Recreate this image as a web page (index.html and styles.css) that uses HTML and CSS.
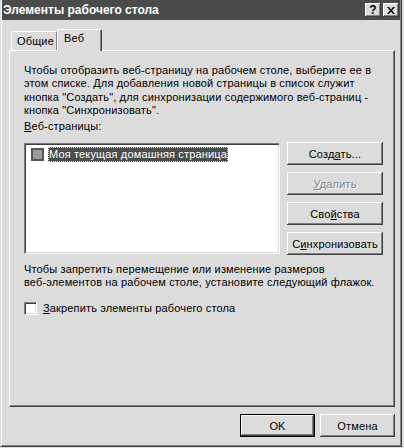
FILE: index.html
```html
<!DOCTYPE html>
<html lang="ru">
<head>
    <meta charset="UTF-8">
    <title>Элементы рабочего стола</title>
    <link rel="stylesheet" href="styles.css">
</head>
<body>
    <div class="window">
        <div class="frame">
            <div class="titlebar">
                <span class="title">Элементы рабочего стола</span>
                <div class="caption-buttons">
                    <span class="caption-btn help">?</span>
                    <span class="caption-btn">
                        <svg width="8" height="7" viewBox="0 0 8 7">
                            <path d="M0 0h2l2 2.5 2-2.5h2l-3 3.5 3 3.5h-2l-2-2.5-2 2.5h-2l3-3.5z" fill="#000"/>
                        </svg>
                    </span>
                </div>
            </div>

            <div class="content">
                <div class="tabs">
                    <div class="tab">Общие</div>
                    <div class="tab active">Веб</div>
                </div>

                <div class="panel">
                    <p class="text">
                        Чтобы отобразить веб-страницу на рабочем столе, выберите ее в<br>
                        этом списке. Для добавления новой страницы в список служит<br>
                        кнопка "Создать", для синхронизации содержимого веб-страниц -<br>
                        кнопка "Синхронизовать".
                    </p>

                    <div class="label"><u>В</u>еб-страницы:</div>

                    <div class="list-row">
                        <div class="listbox">
                            <div class="item">
                                <span class="item-check"></span>
                                <span class="item-text">Моя текущая домашняя страница</span>
                            </div>
                        </div>
                        <div class="side-buttons">
                            <button class="btn">Созд<u>а</u>ть...</button>
                            <button class="btn" disabled><u>У</u>далить</button>
                            <button class="btn">Сво<u>й</u>ства</button>
                            <button class="btn">С<u>и</u>нхронизовать</button>
                        </div>
                    </div>

                    <p class="text note">
                        Чтобы запретить перемещение или изменение размеров<br>
                        веб-элементов на рабочем столе, установите следующий флажок.
                    </p>

                    <label class="check-row">
                        <span class="checkbox"></span>
                        <span><u>З</u>акрепить элементы рабочего стола</span>
                    </label>
                </div>

                <div class="footer">
                    <button class="btn default">OK</button>
                    <button class="btn">Отмена</button>
                </div>
            </div>
        </div>
    </div>
</body>
</html>
```

FILE: styles.css
```css
* {
    box-sizing: border-box;
}
body {
    margin: 0;
    font-family: "Liberation Sans", Arial, sans-serif;
    font-size: 11px;
    letter-spacing: 0.15px;
    color: #000;
    background-color: #dcdcdc;
}
.window {
    width: 402px;
    height: 447px;
    background-color: #dcdcdc;
    border-left: 1px solid #dcdcdc;
    border-right: 1px solid #404040;
    border-bottom: 1px solid #404040;
}
.frame {
    height: 100%;
    border-left: 1px solid #fff;
    border-right: 1px solid #808080;
    border-bottom: 1px solid #808080;
}
.titlebar {
    height: 20px;
    background-color: #4b4b4b;
    display: flex;
    align-items: center;
    justify-content: space-between;
    padding: 0 1px 0 1px;
}
.title {
    color: #fff;
    font-weight: bold;
    font-size: 12px;
    letter-spacing: 0;
}
.caption-buttons {
    display: flex;
    gap: 2px;
}
.caption-btn {
    width: 16px;
    height: 14px;
    background-color: #dcdcdc;
    box-shadow: inset -1px -1px #404040, inset 1px 1px #fff, inset -2px -2px #808080;
    display: flex;
    align-items: center;
    justify-content: center;
}
.help {
    font-weight: bold;
    font-size: 12px;
    line-height: 14px;
}
.content {
    padding: 9px 5px 0 7px;
}
.tabs {
    display: flex;
    align-items: flex-end;
    height: 21px;
    padding-left: 2px;
}
.tab {
    height: 19px;
    width: 46px;
    padding-left: 5px;
    line-height: 18px;
    border-top: 1px solid #fff;
    border-left: 1px solid #fff;
    border-right: 1px solid #808080;
    border-radius: 2px 2px 0 0;
}
.tab.active {
    position: relative;
    width: 45px;
    height: 22px;
    margin-bottom: -1px;
    padding-left: 6px;
    line-height: 16px;
    background-color: #dcdcdc;
    border-right-color: #404040;
    box-shadow: inset -1px 0 #808080;
}
.panel {
    width: 386px;
    height: 357px;
    padding: 13px 0 0 14px;
    border-top: 1px solid #fff;
    border-left: 1px solid #fff;
    border-right: 1px solid #404040;
    border-bottom: 1px solid #404040;
    box-shadow: inset -1px -1px #808080;
}
.text {
    margin: 0;
    line-height: 13.3px;
    white-space: nowrap;
}
.label {
    margin-top: 3px;
    line-height: 13px;
}
.list-row {
    display: flex;
    gap: 7px;
    margin-top: 9px;
}
.listbox {
    width: 256px;
    height: 111px;
    margin-top: 1px;
    background-color: #fff;
    border-top: 1px solid #808080;
    border-left: 1px solid #808080;
    border-right: 1px solid #fff;
    border-bottom: 1px solid #fff;
    box-shadow: inset 1px 1px #404040, inset -1px -1px #dcdcdc;
    padding: 3px 0 0 6px;
}
.item {
    display: flex;
    align-items: center;
    gap: 4px;
}
.item-check {
    width: 13px;
    height: 13px;
    background-color: #9a9a9a;
    border: 2px solid #555;
}
.item-text {
    background-color: #4b4b4b;
    color: #fff;
    line-height: 15px;
    padding: 0 1px;
    outline: 1px dotted #dcdcdc;
    outline-offset: -1px;
}
.side-buttons {
    display: flex;
    flex-direction: column;
    gap: 7px;
}
.btn {
    width: 96px;
    height: 23px;
    padding: 0;
    font-family: inherit;
    font-size: 11px;
    letter-spacing: 0.15px;
    color: #000;
    background-color: #dcdcdc;
    border: none;
    box-shadow: inset -1px -1px #404040, inset 1px 1px #fff, inset -2px -2px #808080;
}
.btn:disabled {
    color: #808080;
    text-shadow: 1px 1px #fff;
}
.note {
    margin-top: 8px;
    line-height: 12.5px;
}
.check-row {
    display: flex;
    align-items: center;
    gap: 6px;
    margin-top: 14px;
    line-height: 13px;
}
.checkbox {
    width: 13px;
    height: 13px;
    background-color: #fff;
    border-top: 1px solid #808080;
    border-left: 1px solid #808080;
    border-right: 1px solid #fff;
    border-bottom: 1px solid #fff;
    box-shadow: inset 1px 1px #404040, inset -1px -1px #dcdcdc;
}
.footer {
    display: flex;
    justify-content: flex-end;
    gap: 5px;
    margin-top: 7px;
}
.footer .btn {
    width: 75px;
}
.btn.default {
    border: 1px solid #000;
}
```
